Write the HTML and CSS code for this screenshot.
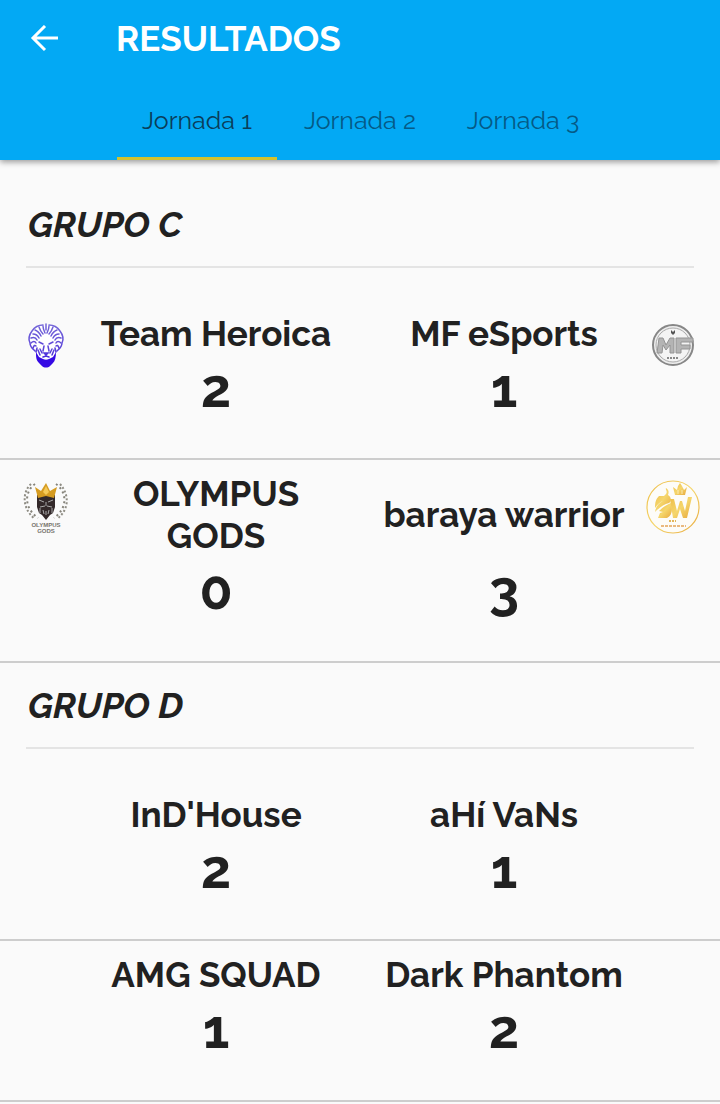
FILE: index.html
```html
<!DOCTYPE html>
<html lang="es">
<head>
<meta charset="utf-8">
<meta name="viewport" content="width=device-width, initial-scale=1">
<title>Resultados</title>
<link rel="stylesheet" href="styles.css">
</head>
<body>
<header class="app-bar">
  <div class="title-row">
    <button class="back" type="button" aria-label="Atrás">
      <svg width="28" height="28" viewBox="0 0 28 28" fill="none" stroke="#fff" stroke-width="3"><path d="M28 13H4M15 1 3 13l12 12"/></svg>
    </button>
    <h1 class="title">RESULTADOS</h1>
  </div>
  <nav class="tabs">
    <button class="tab tab-active" type="button">Jornada 1</button>
    <button class="tab" type="button">Jornada 2</button>
    <button class="tab" type="button">Jornada 3</button>
  </nav>
</header>
<main class="results">
  <section>
    <h2 class="group-title">GRUPO C</h2>
    <article class="match match-first">
      <svg class="logo logo-home" viewBox="0 0 56 56" fill="none" stroke-linecap="round">
        <defs><linearGradient id="lion" x1="0" y1="6" x2="0" y2="50" gradientUnits="userSpaceOnUse"><stop offset="0" stop-color="#7668d8"/><stop offset=".6" stop-color="#5a42d8"/><stop offset="1" stop-color="#2c00e8"/></linearGradient></defs>
        <path d="M28 7c-9 0-15 5-17 13 0 6 1 11 6 15 2 8 5 13 11 14 6-1 9-6 11-14 5-4 7-9 6-15-2-8-8-13-17-13z" fill="#fff"/>
        <g stroke="url(#lion)" stroke-width="1.5">
          <path d="M25 7c-5 0-9 3-11 6-3 4-4 8-2 12 0 4 3 6 5 8M31 7c5 0 9 3 11 6 3 4 4 8 2 12 0 4-3 6-5 8"/>
          <path d="M28 6v6M25 8c0 3 1 5 2 7M31 8c0 3-1 5-2 7M21 9c1 3 2 5 4 7M35 9c-1 3-2 5-4 7M17 12c3 1 5 4 6 6M39 12c-3 1-5 4-6 6M15 16c3 0 5 2 6 4M41 16c-3 0-5 2-6 4M13 20c3-1 5 0 6 2M43 20c-3-1-5 0-6 2M13 25c2-2 4-2 5 0M43 25c-2-2-4-2-5 0M15 30c1-3 2-3 3-2M41 30c-1-3-2-3-3-2M18 34l1-4M38 34l-1-4"/>
          <path d="M21 24l4 2M35 24l-4 2M26 28l-1 5M30 28l1 5M22 31l2 4M34 31l-2 4M20 32l2 5M36 32l-2 5"/>
          <path d="M26 35h4l-2 2zM25 39l3-1 3 1" fill="#5a42d8"/>
        </g>
        <path d="M18 34l3 5 4 2c2 1 4 1 6 0l4-2 3-5c0 5-1 9-3 11l-3 3c-2 2-6 2-8 0l-3-3c-3-3-3-6-3-11z" fill="#3509e4"/>
      </svg>
      <h3 class="name name-home">Team Heroica</h3>
      <h3 class="name name-away">MF eSports</h3>
      <svg class="logo logo-away" viewBox="0 0 56 56">
        <circle cx="27" cy="27" r="20" fill="#eee" stroke="#878787" stroke-width="2"/>
        <circle cx="27" cy="27" r="17" fill="#f4f4f4" stroke="#aaa"/>
        <path d="M25 12l2 2 2-2v3l-2 2-2-2z" fill="#555"/>
        <path d="M11 35l2-15h4l3 7 4-7h4v15h-4v-8l-4 5-3-5-1 8zM30 20h17v4H35v3h9v4h-9v4h-5z" fill="#b4b4b4" stroke="#949494"/>
        <path d="M21 40h12" stroke="#888" stroke-width="2" stroke-dasharray="2 1"/>
      </svg>
      <p class="score score-home">2</p>
      <p class="score score-away">1</p>
    </article>
    <article class="match">
      <svg class="logo logo-home" viewBox="0 0 56 56">
        <g fill="none" stroke="#85837a" stroke-width="2" stroke-dasharray="2 3">
          <path d="M17 6C6 14 6 30 20 40M38 6c11 8 12 24-2 34"/>
        </g>
        <g fill="none" stroke="#8f8d84" stroke-width="2" stroke-dasharray="2 2">
          <path d="M13 6C4 14 4 31 17 41M42 6c9 10 10 25-3 35"/>
        </g>
        <path d="M19 17h18v12l-2 6-3 2-4 5-4-5-3-2-2-6z" fill="#33292a"/>
        <path d="M17 9l6 4 5-8 4 8 7-4-3 11-8-2-8 2z" fill="#d59b20"/>
        <path d="M25 14l3-6 3 6-3 3z" fill="#f6ca58"/>
        <path d="M21 22l5 2M35 22l-5 2M28 24v4M22 29l5-1M34 29l-5-1M22 30v5M34 30v5M25 32l1 4M31 32l-1 4M28 33v4" fill="none" stroke="#aaa"/>
        <text class="logo-text" x="28" y="49" fill="#77746c" font-size="6">OLYMPUS</text>
        <text class="logo-text" x="28" y="55" fill="#77746c" font-size="6">GODS</text>
      </svg>
      <h3 class="name name-home">OLYMPUS GODS</h3>
      <h3 class="name name-away">baraya warrior</h3>
      <svg class="logo logo-away" viewBox="0 0 56 56">
        <defs><linearGradient id="gold" x1="0" y1="0" x2="1" y2="1"><stop offset="0" stop-color="#edbd48"/><stop offset=".5" stop-color="#f5d66c"/><stop offset="1" stop-color="#e8a93c"/></linearGradient></defs>
        <circle cx="27" cy="29" r="26" fill="#fdfcf8" stroke="url(#gold)" stroke-width="1.2"/>
        <g fill="url(#gold)">
          <path d="M13 18h5l2-2c2-3-1-4 0-6 3 2 3 4 2 7 4 2 3 7 1 8-5 1-9 4-14 9 1-6 4-9 8-11-3 1-6 4-8 7 0-6 1-9 4-12z"/>
          <path d="M25 25c2 6 1 13-4 15h-9l2-5 3-1-4-1c4-4 7-6 12-8z"/>
          <path d="M24 21h4l3 12 3-10h2l3 10 3-14h4l-5 21h-4l-3-9-3 9h-4z"/>
          <path d="M27 9l4 3 1-4 2-3 2 3 2 4 3-3-2 8H29z"/>
        </g>
        <path d="M32 12v4M36 12v4" stroke="#fdf3c8" stroke-width=".8"/>
        <path d="M23 43h7" stroke="#e3b65a" stroke-width="2" stroke-dasharray="2 1"/>
        <path d="M15 48h25" stroke="#e3a458" stroke-width="1.5" stroke-dasharray="3 1"/>
      </svg>
      <p class="score score-home">0</p>
      <p class="score score-away">3</p>
    </article>
  </section>
  <section>
    <h2 class="group-title">GRUPO D</h2>
    <article class="match match-first">
      <h3 class="name name-home">InD'House</h3>
      <h3 class="name name-away">aHí VaNs</h3>
      <p class="score score-home">2</p>
      <p class="score score-away">1</p>
    </article>
    <article class="match">
      <h3 class="name name-home">AMG SQUAD</h3>
      <h3 class="name name-away">Dark Phantom</h3>
      <p class="score score-home">1</p>
      <p class="score score-away">2</p>
    </article>
  </section>
</main>
</body>
</html>
```
FILE: styles.css
```css
* { box-sizing: border-box; }
body {
  margin: 0;
  background: #fafafa;
  color: #212121;
  font-family: Raleway, Lato, sans-serif;
}
h1, h2, h3, p { margin: 0; }
button {
  border: 0;
  padding: 0;
  background: none;
  color: inherit;
  font: inherit;
}
.app-bar {
  position: relative;
  background: #03a9f4;
  box-shadow: 0 2px 6px rgba(0, 0, 0, .4);
}
.title-row {
  display: flex;
  align-items: center;
  height: 80px;
  padding: 0 30px 2px;
}
.back { display: flex; width: 86px; }
.title {
  color: #fff;
  font-size: 35px;
  line-height: 44px;
  font-weight: 700;
}
.tabs { display: flex; justify-content: center; gap: 3px; }
.tab {
  width: 160px;
  height: 80px;
  padding-top: 2px;
  border-bottom: 3px solid transparent;
  color: #055a86;
  font-size: 25px;
}
.tab-active { color: #0a3d5a; border-color: #d4c22e; }
.results { padding-top: 22px; }
.group-title {
  margin: 0 26px;
  padding: 20px 2px;
  border-bottom: 2px solid #e4e4e4;
  font-size: 36px;
  line-height: 44px;
  font-style: italic;
  font-weight: 700;
}
.match {
  display: grid;
  grid-template-columns: 72px 1fr 1fr 72px;
  align-items: center;
  padding: 13px 0 30px;
  border-bottom: 2px solid #cdcdcd;
}
.match-first { padding: 45px 0 29px; }
.name {
  grid-row: 1;
  padding: 0 20px;
  font-size: 35px;
  line-height: 42px;
  font-weight: 700;
  text-align: center;
}
.score {
  grid-row: 2;
  font-size: 54px;
  line-height: 66px;
  padding-bottom: 8px;
  font-weight: 700;
  text-align: center;
}
.name-home, .score-home { grid-column: 2; }
.name-away, .score-away { grid-column: 3; }
.logo {
  grid-row: 1 / 3;
  align-self: start;
  width: 56px;
  height: 56px;
  margin-top: 5px;
}
.logo-home { grid-column: 1; justify-self: center; margin-left: 20px; }
.logo-away { grid-column: 4; justify-self: center; margin-right: 20px; }
.logo-text {
  font-family: "Liberation Sans", sans-serif;
  font-weight: 700;
  text-anchor: middle;
}
```
